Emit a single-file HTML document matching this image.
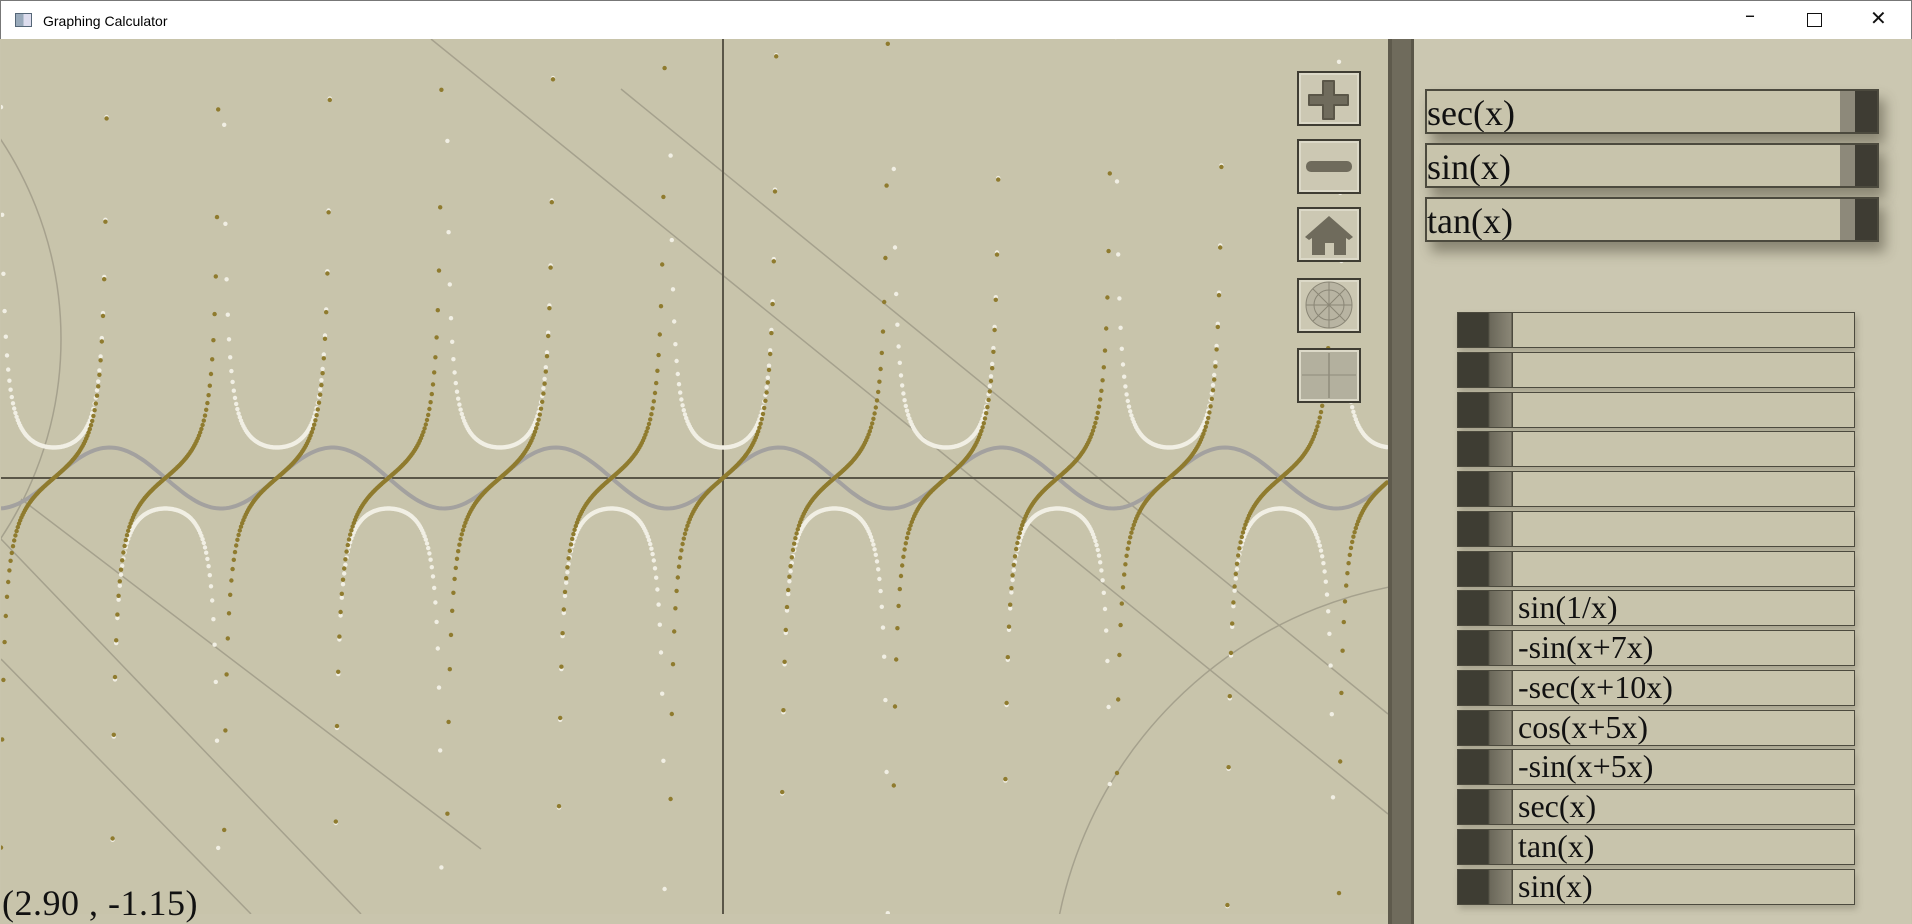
<!DOCTYPE html>
<html><head><meta charset="utf-8"><style>
*{margin:0;padding:0;box-sizing:border-box}
html,body{width:1912px;height:924px;overflow:hidden}
body{background:#c9c5ad;font-family:"Liberation Serif",serif;position:relative}
#title{position:absolute;left:0;top:0;width:1912px;height:39px;background:#fff;border:1px solid #777;border-bottom:none;font-family:"Liberation Sans",sans-serif;font-size:14px;color:#000}
#title .t{position:absolute;left:42px;top:12px}
#title .ic{position:absolute;left:14px;top:12px;width:17px;height:14px;border:1px solid #567;background:linear-gradient(90deg,#9ab 50%,#dde 50%)}
.wc{position:absolute;top:6px;font-size:20px;color:#111;font-family:"DejaVu Sans",sans-serif}
#graph{position:absolute;left:1px;top:39px;width:1387px;height:875px;background:#c8c4ab;overflow:hidden}
#div{position:absolute;left:1388px;top:39px;width:26px;height:885px;background:#6f6b5c;border-left:4px solid #5e5a4c;border-right:3px solid #5a5648}
#panel{position:absolute;left:1414px;top:39px;width:497px;height:885px;background:#cbc7b1}
.tb{position:absolute;left:1425px;width:454px;height:45px;background:#c8c4ac;border:2px solid #4c4a3e;box-shadow:6px 10px 12px rgba(60,55,40,.45);font-size:36px;line-height:44px;color:#111;overflow:hidden}
.tb:after{content:"";position:absolute;right:0;top:0;width:37px;height:100%;background:linear-gradient(90deg,#8d897a 0,#8d897a 15px,#3e3c33 15px)}
.lr{position:absolute;left:1457px;width:398px;height:36px;border:1.5px solid #4c4a3e;background:linear-gradient(90deg,#3e3d33 0,#3e3d33 30px,#6b685a 32px,#8a8676 53px,#4c4a3e 54px,#4c4a3e 55px,#c8c4ac 55px);font-size:32px;line-height:32px;color:#111;padding-left:60px;box-shadow:2px 4px 6px rgba(60,55,40,.25);overflow:hidden;white-space:nowrap}
.btn{position:absolute;left:1297px;width:64px;height:55px;border:2px solid #3f3d33;background:#ccc8b3;box-shadow:inset 0 0 0 2px #dcd9c8}
#coord{position:absolute;left:2px;top:882px;font-size:36px;letter-spacing:0.5px;color:#111}
</style></head><body>
<div id="title"><div class="ic"></div><div class="t">Graphing Calculator</div>
<div class="wc" style="left:1744px;top:2px">&#8211;</div>
<div class="wc" style="left:1806px;width:15px;height:14px;top:12px;border:1.5px solid #111"></div>
<div class="wc" style="left:1869px;top:5px">&#10005;</div></div>
<div id="graph"><svg id="svg" width="1387" height="875" xmlns="http://www.w3.org/2000/svg">
<g stroke="#9d9986" stroke-width="1.5" fill="none" opacity=".8">
<line x1="430" y1="0" x2="1387" y2="775"/><line x1="620" y1="50" x2="1387" y2="675"/><line x1="0" y1="500" x2="360" y2="875"/><line x1="0" y1="620" x2="250" y2="875"/><line x1="20" y1="460" x2="480" y2="810"/>
<circle cx="1470" cy="960" r="420"/><circle cx="-300" cy="300" r="360"/></g>
<line x1="722" y1="0" x2="722" y2="875" stroke="#5a5648" stroke-width="2"/>
<line x1="0" y1="439" x2="1387" y2="439" stroke="#5a5648" stroke-width="2"/>
<g id="curves"></g>
</svg></div>
<div class="btn" style="top:71px"><svg width="60" height="51"><path d="M24 8h11v14h14v10H35v14H24V32H10V22h14z" fill="#6f6b5c" stroke="#5a5648" stroke-linejoin="round" stroke-width="2"/></svg></div>
<div class="btn" style="top:139px"><svg width="60" height="51"><rect x="7" y="20" width="46" height="11" rx="5" fill="#6f6b5c"/></svg></div>
<div class="btn" style="top:207px"><svg width="60" height="51"><path d="M6 28L30 7l24 21-4 3-3-2v17H35V34h-9v12H13V29l-3 2z" fill="#6f6b5c"/></svg></div>
<div class="btn" style="top:278px"><svg width="60" height="51"><circle cx="30" cy="25" r="23" fill="#b8b4a2" stroke="#8a8676"/><g stroke="#8a8676"><line x1="7" y1="25" x2="53" y2="25"/><line x1="30" y1="2" x2="30" y2="48"/><line x1="14" y1="9" x2="46" y2="41"/><line x1="46" y1="9" x2="14" y2="41"/><circle cx="30" cy="25" r="15" fill="none"/></g></svg></div>
<div class="btn" style="top:348px;background:#b3b09e"><svg width="60" height="51"><line x1="30" y1="3" x2="30" y2="48" stroke="#7d7a6a"/><line x1="3" y1="25" x2="57" y2="25" stroke="#8f8c7c"/></svg></div>
<div id="div"></div><div id="panel"></div>
<div class="tb" style="top:89px">sec(x)</div>
<div class="tb" style="top:143px">sin(x)</div>
<div class="tb" style="top:197px">tan(x)</div>
<div class="lr" style="top:312px"></div>
<div class="lr" style="top:352px"></div>
<div class="lr" style="top:392px"></div>
<div class="lr" style="top:431px"></div>
<div class="lr" style="top:471px"></div>
<div class="lr" style="top:511px"></div>
<div class="lr" style="top:551px"></div>
<div class="lr" style="top:590px">sin(1/x)</div>
<div class="lr" style="top:630px">-sin(x+7x)</div>
<div class="lr" style="top:670px">-sec(x+10x)</div>
<div class="lr" style="top:710px">cos(x+5x)</div>
<div class="lr" style="top:749px">-sin(x+5x)</div>
<div class="lr" style="top:789px">sec(x)</div>
<div class="lr" style="top:829px">tan(x)</div>
<div class="lr" style="top:869px">sin(x)</div>
<div id="coord">(2.90 , -1.15)</div>
<script>
(function(){
var ox=722,oy=439,ux=35.5,uy=30.5,W=1387,g=document.getElementById('curves'),ns='http://www.w3.org/2000/svg';
var d='';for(var px=0;px<=W;px+=3){var x=(px-ox)/ux;d+=(px?'L':'M')+px+' '+(oy-Math.sin(x)*uy).toFixed(1);}
var p=document.createElementNS(ns,'path');p.setAttribute('d',d);p.setAttribute('stroke','#a3a19f');p.setAttribute('stroke-width','4');p.setAttribute('fill','none');g.appendChild(p);
var s='';
function dots(f,col,r){var out='';for(var px=0;px<=W;px+=1.2){var x=(px-ox)/ux,y=f(x);if(!isFinite(y)||Math.abs(y)>16)continue;var py=oy-y*uy;out+='<circle cx="'+px.toFixed(1)+'" cy="'+py.toFixed(1)+'" r="'+r+'" fill="'+col+'"/>';}return out;}
s+=dots(function(x){return 1/Math.cos(x)},'#f1efe4',2.2);
s+=dots(Math.tan,'#8f7b2e',2.2);
g.innerHTML+=s;
})();
</script>
</body></html>
